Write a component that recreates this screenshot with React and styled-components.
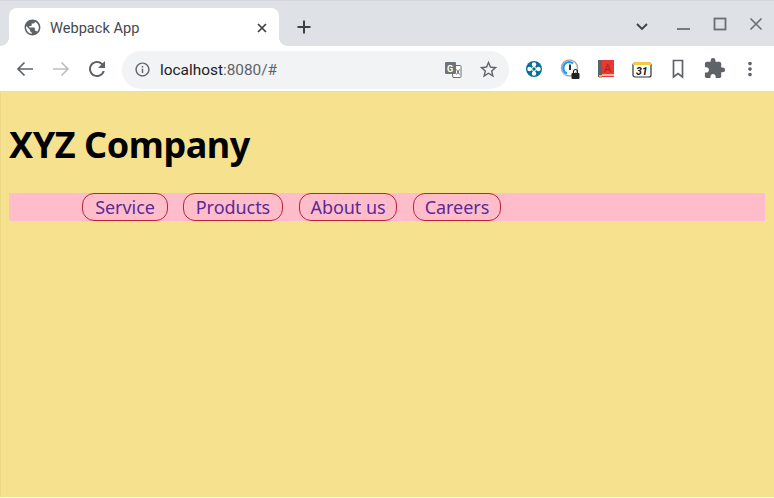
import React from 'react';
import styled, { createGlobalStyle } from 'styled-components';
import { MdPublic, MdRefresh, MdInfoOutline, MdStarBorder, MdExtension, MdMoreVert } from 'react-icons/md';

const GlobalStyle = createGlobalStyle`
	html, body {
		margin: 0;
		padding: 0;
		height: 100%;
		overflow: hidden;
	}
`;

const Window = styled.div`
	width: 774px;
	height: 498px;
	display: flex;
	flex-direction: column;
	padding-bottom: 1px;
	box-sizing: border-box;
	background: #f8f8f6;
	font-family: 'Roboto', 'Liberation Sans', sans-serif;
`;

const TabStrip = styled.div`
	height: 46px;
	flex: none;
	display: flex;
	align-items: flex-end;
	background: #dee1e6;
	padding-left: 9px;
	border-top: 1px solid #d3d6db;
	box-sizing: border-box;
`;

const Tab = styled.div`
	position: relative;
	width: 270px;
	height: 38px;
	flex: none;
	display: flex;
	align-items: center;
	padding: 1px 10px 0 14px;
	box-sizing: border-box;
	background: #fff;
	border-radius: 8px 8px 0 0;

	&::before,
	&::after {
		content: '';
		position: absolute;
		bottom: 0;
		width: 8px;
		height: 8px;
	}
	&::before {
		left: -8px;
		background: radial-gradient(circle at 0 0, transparent 7.5px, #fff 8px);
	}
	&::after {
		right: -8px;
		background: radial-gradient(circle at 100% 0, transparent 7.5px, #fff 8px);
	}
`;

const TabTitle = styled.span`
	flex: 1;
	margin-left: 8px;
	font-size: 14.6px;
	color: #45484c;
`;

const NewTab = styled.div`
	width: 16px;
	height: 16px;
	margin: 0 0 11px 17px;
	color: #3c4043;
`;

const WindowControls = styled.div`
	margin-left: auto;
	align-self: stretch;
	display: flex;
	padding-right: 10px;
`;

const Toolbar = styled.div`
	height: 45px;
	flex: none;
	display: flex;
	align-items: center;
	background: #fff;
	padding-left: 13px;
	box-sizing: border-box;
`;

const NavButton = styled.div`
	width: 24px;
	height: 24px;
	margin-right: 12px;
	display: flex;
	align-items: center;
	justify-content: center;
	color: #5f6368;
`;

const Omnibox = styled.div`
	width: 387px;
	height: 38px;
	flex: none;
	margin: 2px 0 0 1px;
	display: flex;
	align-items: center;
	padding: 0 10px 0 12px;
	box-sizing: border-box;
	border-radius: 19px;
	background: #f1f3f4;
	font-size: 15.4px;
`;

const Host = styled.span`
	margin-left: 9px;
	color: #202124;
`;

const Port = styled.span`
	flex: 1;
	color: #5f6368;
`;

const TranslateIcon = styled.svg`
	margin-right: 15px;
`;

const ExtensionBar = styled.div`
	display: flex;
	align-items: center;
	margin-left: 13px;
	gap: 12px;
`;

const ExtensionSlot = styled.div`
	width: 24px;
	height: 24px;
	display: flex;
	align-items: center;
	justify-content: center;
`;

const Divider = styled.div`
	height: 1px;
	flex: none;
	background: #dcdcd8;
`;

const Page = styled.main`
	flex: 1;
	padding: 0 8px;
	background: #f5e18e;
	border-left: 1px solid #ecd888;
	border-right: 1px solid #f5e18e;
	font-family: 'Noto Sans', sans-serif;
	overflow: hidden;
`;

const Heading = styled.h1`
	margin: 27px 0 22px;
	font-size: 36px;
	line-height: 52px;
	font-weight: 700;
	letter-spacing: -0.45px;
	color: #000;
`;

const NavRow = styled.nav`
	height: 28px;
	display: flex;
	align-items: stretch;
	padding-left: 73px;
	background: #ffbdcb;
`;

const NavLink = styled.a`
	width: ${props => props.$width}px;
	margin-right: ${props => props.$gap}px;
	display: flex;
	align-items: center;
	justify-content: center;
	box-sizing: border-box;
	border: 1px solid #bb2233;
	border-radius: 12px;
	font-size: 18px;
	letter-spacing: -0.05px;
	color: #5a2a96;
	text-decoration: none;
`;

const links = [
	{ label: 'Service', width: 86, gap: 15 },
	{ label: 'Products', width: 100, gap: 16 },
	{ label: 'About us', width: 98, gap: 16 },
	{ label: 'Careers', width: 88, gap: 0 },
];

export default function App() {
	return (
		<Window>
			<GlobalStyle />
			<TabStrip>
				<Tab>
					<MdPublic size={19} color="#5f6368" />
					<TabTitle>Webpack App</TabTitle>
					<svg width="14" height="14" viewBox="0 0 14 14">
						<path d="M3 3l8 8M11 3l-8 8" stroke="#3c4043" strokeWidth="1.7" />
					</svg>
				</Tab>
				<NewTab>
					<svg width="16" height="16" viewBox="0 0 16 16">
						<path d="M8 1.500v13M1.500 8h13" stroke="#3c4043" strokeWidth="2" />
					</svg>
				</NewTab>
				<WindowControls>
					<svg width="130" height="45" viewBox="0 0 130 45">
						<path d="M3 23l5 5 5-5" fill="none" stroke="#3c4043" strokeWidth="1.8" />
						<path d="M43 28h13" stroke="#6b6e73" strokeWidth="1.8" />
						<rect x="80.500" y="17.500" width="11" height="11" fill="none" stroke="#6b6e73" strokeWidth="1.8" />
						<path d="M116.500 17.500l11 11M127.500 17.500l-11 11" stroke="#6b6e73" strokeWidth="1.600" />
					</svg>
				</WindowControls>
			</TabStrip>
			<Toolbar>
				<NavButton>
					<svg width="24" height="24" viewBox="0 0 24 24">
						<path d="M20 12H5M11.500 5.500L5 12l6.500 6.500" fill="none" stroke="#5f6368" strokeWidth="1.700" />
					</svg>
				</NavButton>
				<NavButton>
					<svg width="24" height="24" viewBox="0 0 24 24">
						<path d="M4 12h15M12.500 5.500L19 12l-6.500 6.500" fill="none" stroke="#bcbec1" strokeWidth="1.700" />
					</svg>
				</NavButton>
				<NavButton>
					<MdRefresh size={24} />
				</NavButton>
				<Omnibox>
					<MdInfoOutline size={17} color="#5f6368" />
					<Host>localhost</Host>
					<Port>:8080/#</Port>
					<TranslateIcon width="20" height="20" viewBox="0 0 20 20">
						<path d="M8 5.500h9a1 1 0 0 1 1 1v10a1 1 0 0 1-1 1h-7z" fill="#fff" stroke="#6b6e73" />
						<rect x="2" y="2" width="11" height="12" rx="1" fill="#6f7377" />
						<path d="M13.500 9.500l3 5M16.500 9.500l-3 5" stroke="#5f6368" />
						<text x="4" y="11.500" fontSize="9" fontWeight="700" fill="#fff" fontFamily="Roboto">G</text>
					</TranslateIcon>
					<MdStarBorder size={21} color="#5f6368" />
				</Omnibox>
				<ExtensionBar>
					<ExtensionSlot>
						<svg width="24" height="24" viewBox="0 0 24 24">
							<circle cx="12" cy="12" r="8" fill="#076f94" />
							<circle cx="12" cy="7.500" r="2.200" fill="#fff" />
							<circle cx="12" cy="16.500" r="2.200" fill="#fff" />
							<circle cx="7.500" cy="12" r="2.200" fill="#fff" />
							<circle cx="16.500" cy="12" r="2.200" fill="#fff" />
							<path d="M12 8.500l3.500 3.500-3.500 3.500-3.500-3.500z" fill="#fff" />
							<circle cx="12" cy="12" r="1.700" fill="#076f94" />
						</svg>
					</ExtensionSlot>
					<ExtensionSlot>
						<svg width="24" height="24" viewBox="0 0 24 24">
							<circle cx="11.500" cy="11" r="8" fill="none" stroke="#a8abae" strokeWidth="1.500" />
							<path d="M9 16.500a6 6 0 0 1 2-11.500c1.500 0 3 .5 4 1.500" fill="none" stroke="#2196f3" strokeWidth="2.200" />
							<path d="M12 7.500v5.500" stroke="#333" strokeWidth="2" />
							<rect x="13.500" y="16" width="8" height="6" rx="1" fill="#222" />
							<path d="M15.500 16v-1.500a2 2 0 0 1 4 0V16" fill="none" stroke="#222" strokeWidth="1.200" />
						</svg>
					</ExtensionSlot>
					<ExtensionSlot>
						<svg width="24" height="24" viewBox="0 0 24 24">
							<rect x="4" y="3" width="16" height="17" fill="#e53935" />
							<rect x="4" y="3" width="4" height="17" fill="#5f6368" />
							<rect x="8" y="17" width="12" height="2" fill="#ffb3a7" />
							<text x="10" y="15" fontSize="11" fill="#b71c1c" fontFamily="Roboto">A</text>
							<rect x="5" y="18" width="3" height="3" fill="#f9a825" />
						</svg>
					</ExtensionSlot>
					<ExtensionSlot>
						<svg width="24" height="24" viewBox="0 0 24 24">
							<rect x="3" y="6" width="18" height="14" rx="2" fill="#fff" stroke="#333" strokeWidth="1.200" />
							<path d="M3 8V7a2 2 0 0 1 2-2h14a2 2 0 0 1 2 2v1z" fill="#f6c944" />
							<text x="6" y="18" fontSize="10.500" fontWeight="700" fontStyle="italic" fill="#111" fontFamily="Roboto">31</text>
						</svg>
					</ExtensionSlot>
					<ExtensionSlot>
						<svg width="24" height="24" viewBox="0 0 24 24">
							<path d="M7.500 3.500h9v16.500L12 16.500 7.500 20z" fill="none" stroke="#5f6368" strokeWidth="1.700" />
						</svg>
					</ExtensionSlot>
					<ExtensionSlot>
						<MdExtension size={23} color="#5f6368" />
					</ExtensionSlot>
					<ExtensionSlot>
						<MdMoreVert size={22} color="#5f6368" />
					</ExtensionSlot>
				</ExtensionBar>
			</Toolbar>
			<Divider />
			<Page>
				<Heading>XYZ Company</Heading>
				<NavRow>
					{links.map(link => (
						<NavLink key={link.label} href="#" $width={link.width} $gap={link.gap}>{link.label}</NavLink>
					))}
				</NavRow>
			</Page>
		</Window>
	);
}
